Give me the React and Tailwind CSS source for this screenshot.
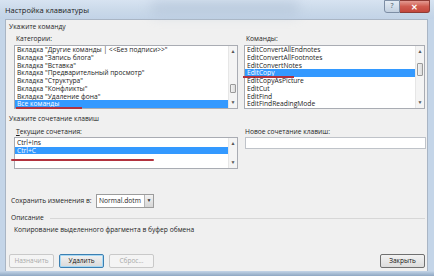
const leftItems = [
  "Вкладка \"Другие команды | <<Без подписи>>\"",
  "Вкладка \"Запись блога\"",
  "Вкладка \"Вставка\"",
  "Вкладка \"Предварительный просмотр\"",
  "Вкладка \"Структура\"",
  "Вкладка \"Конфликты\"",
  "Вкладка \"Удаление фона\"",
  "Все команды",
];

const rightItems = [
  "EditConvertAllEndnotes",
  "EditConvertAllFootnotes",
  "EditConvertNotes",
  "EditCopy",
  "EditCopyAsPicture",
  "EditCut",
  "EditFind",
  "EditFindReadingMode",
];

function ScrollBar({ thumbTop, thumbH }) {
  return (
    <div className="relative w-[9px] h-full bg-[#f4f4f4] border-l border-[#e6e6e6] flex flex-col justify-between items-center py-[3px]">
      <span className="text-[5px] leading-[5px] text-[#555]">▲</span>
      <span className="text-[5px] leading-[5px] text-[#555]">▼</span>
      {thumbH ? (
        <div
          className="absolute left-[1px] right-[1px] bg-gradient-to-r from-[#f3f3f3] to-[#dcdcdc] border border-[#9a9a9a] rounded-[1px]"
          style={{ top: thumbTop, height: thumbH }}
        />
      ) : null}
    </div>
  );
}

function ListBox({ items, selected, width, thumbTop, thumbH, mark }) {
  return (
    <div
      className="flex h-[64px] bg-white border border-[#a9acb3]"
      style={{ width }}
    >
      <div className="flex-1 flex flex-col">
        {items.map((t, i) => (
          <div
            key={t}
            className={
              "relative h-[7.75px] leading-[7.75px] pl-[2px] whitespace-nowrap " +
              (i === selected ? "bg-[#3399ff] text-white" : "text-[#222]")
            }
          >
            {t}
            {i === selected && mark ? (
              <div
                className="absolute top-[7px] h-[2px] bg-[#b2323e]"
                style={{ left: mark[0], width: mark[1] }}
              />
            ) : null}
          </div>
        ))}
      </div>
      <ScrollBar thumbTop={thumbTop} thumbH={thumbH} />
    </div>
  );
}

function Btn({ children, disabled, focused, className = "" }) {
  return (
    <div
      className={
        "h-[14px] w-[45px] flex items-center justify-center rounded-[2px] border text-[6.5px] " +
        (disabled
          ? "border-[#c9c9c9] bg-[#f4f4f4] text-[#a8a8a8] "
          : focused
          ? "border-[#3c7fb1] bg-gradient-to-b from-[#f2f2f2] to-[#d9d9d9] text-[#111] shadow-[inset_0_0_0_1px_#a7d9f5] "
          : "border-[#707070] bg-gradient-to-b from-[#f2f2f2] to-[#dcdcdc] text-[#111] ") +
        className
      }
    >
      {children}
    </div>
  );
}

export default function App() {
  return (
    <div
      className="w-[434px] h-[276px] flex flex-col overflow-hidden bg-[#c4d5e8] text-[6.7px] text-[#1e1e1e]"
      style={{ fontFamily: "'Open Sans', 'Noto Sans', sans-serif" }}
    >
      {/* title bar */}
      <div className="relative h-[19px] flex items-start bg-gradient-to-b from-[#d7e3f1] via-[#cbdaea] to-[#c2d3e7]">
        <div className="absolute left-[150px] top-[0px] w-[150px] h-[16px] rounded-full bg-[#aebfd4] opacity-50 blur-[6px]" />
        <div className="relative pl-[5px] pt-[5px] text-[7.5px] text-[#1a1a1a]">Настройка клавиатуры</div>
        <div className="relative ml-auto mr-[4px] flex">
          <div className="w-[16px] h-[13px] border border-[#7d8ea5] rounded-bl-[3px] bg-gradient-to-b from-[#e3ebf4] to-[#c2d0e0] flex items-center justify-center text-[7px] text-[#4a5565]">
            ?
          </div>
          <div className="w-[30px] h-[13px] border border-[#8e3b35] border-l-0 rounded-br-[3px] bg-gradient-to-b from-[#e39a92] via-[#cf5b4f] to-[#c3473d] flex items-center justify-center text-[8px] font-bold text-white">
            ✕
          </div>
        </div>
      </div>

      <div className="flex flex-1">
        <div className="w-[5px]" />
        {/* client area */}
        <div className="w-[422px] bg-[#f0f0f0] border-t border-l border-[#a9b5c4] flex flex-col">
          <div className="h-[12px] pl-[3px] pt-[1px] leading-[12px]">Укажите команду</div>

          <div className="flex gap-[6px] pl-[8px] mt-[1px]">
            <div className="flex flex-col">
              <div className="h-[12px] leading-[12px] pl-[2px]">Категории:</div>
              <ListBox items={leftItems} selected={7} width={224} thumbTop={38} thumbH={9} mark={[1, 66]} />
            </div>
            <div className="flex flex-col">
              <div className="h-[12px] leading-[12px] pl-[2px]">Команды:</div>
              <ListBox items={rightItems} selected={3} width={181} thumbTop={17} thumbH={13} mark={[-2, 51]} />
            </div>
          </div>

          <div className="h-[12px] pl-[3px] mt-[4px] leading-[12px]">Укажите сочетание клавиш</div>

          <div className="flex gap-[7px] pl-[8px] mt-[1px]">
            <div className="flex flex-col">
              <div className="h-[11px] leading-[11px] pl-[2px]">
                <span className="underline">Т</span>екущие сочетания:
              </div>
              <div className="relative flex h-[32px] w-[224px] bg-white border border-[#a9acb3]">
                <div className="flex-1 flex flex-col pt-[1px]">
                  <div className="h-[7.5px] leading-[7.5px] pl-[2px] text-[#222]">Ctrl+Ins</div>
                  <div className="h-[7.5px] leading-[7.5px] pl-[2px] bg-[#3399ff] text-white">Ctrl+C</div>
                </div>
                <ScrollBar />
                <div className="absolute left-[-4px] top-[21px] w-[143px] h-[2px] bg-[#b2323e] rounded-full" />
              </div>
            </div>
            <div className="flex flex-col">
              <div className="h-[11px] leading-[11px]">Новое сочетание клавиш:</div>
              <div className="h-[12px] w-[181px] bg-white border border-[#bfc3c9]" />
            </div>
          </div>

          <div className="flex items-center pl-[5px] mt-[25px] h-[14px]">
            <div className="w-[85px]">Сохранить изменения в:</div>
            <div className="flex h-[14px] w-[58px] border border-[#9c9c9c] bg-white">
              <div className="flex-1 pl-[2px] leading-[12px]">Normal.dotm</div>
              <div className="w-[9px] border-l border-[#b5b5b5] bg-gradient-to-b from-[#f2f2f2] to-[#d6d6d6] flex items-center justify-center text-[5px] text-[#333]">
                ▼
              </div>
            </div>
          </div>

          <div className="flex items-center pl-[5px] pr-[2px] mt-[4px] h-[12px]">
            <div>Описание</div>
            <div className="flex-1 ml-[6px] h-px bg-[#d7d7d7]" />
          </div>
          <div className="pl-[8px] h-[12px] leading-[12px]">
            Копирование выделенного фрагмента в буфер обмена
          </div>

          <div className="flex items-center gap-[5px] pl-[3px] pr-[2px] mt-[18px]">
            <Btn disabled>Назначить</Btn>
            <Btn focused>Удалить</Btn>
            <Btn disabled>Сброс...</Btn>
            <Btn className="ml-auto">Закрыть</Btn>
          </div>
        </div>
        <div className="w-[7px] border-l border-[#a9b5c4]" />
      </div>
      <div className="h-[5px] bg-gradient-to-b from-[#c4d5e8] to-[#8fa7c2]" />
    </div>
  );
}
